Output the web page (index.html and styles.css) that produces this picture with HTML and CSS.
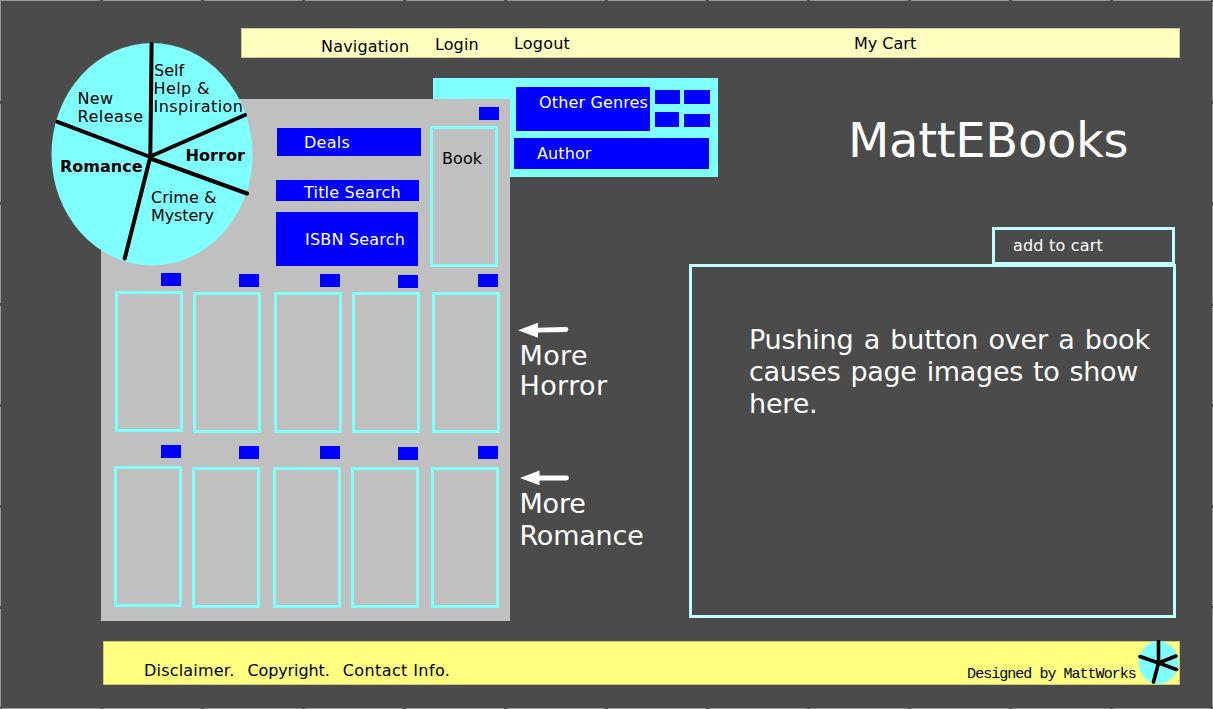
FILE: index.html
```html
<!DOCTYPE html>
<html lang="en">
<head>
<meta charset="utf-8">
<title>MattEBooks</title>
<link rel="stylesheet" href="styles.css">
</head>
<body>
<div class="page">
  <nav class="nav">
    <a class="nav-navigation">Navigation</a>
    <a class="nav-login">Login</a>
    <a class="nav-logout">Logout</a>
    <a class="nav-cart">My Cart</a>
  </nav>

  <main class="main">
    <section class="shelf">
      <div class="shelf-head">
        <div class="searches">
          <div class="btn deals">Deals</div>
          <div class="btn title-search">Title Search</div>
          <div class="btn isbn-search">ISBN Search</div>
        </div>
        <div class="cell featured"><i class="tag"></i><div class="book">Book</div></div>
      </div>
      <div class="row row-horror">
        <div class="cell"><i class="tag"></i><div class="book"></div></div>
        <div class="cell"><i class="tag"></i><div class="book"></div></div>
        <div class="cell"><i class="tag"></i><div class="book"></div></div>
        <div class="cell"><i class="tag"></i><div class="book"></div></div>
        <div class="cell"><i class="tag"></i><div class="book"></div></div>
      </div>
      <div class="row row-romance">
        <div class="cell"><i class="tag"></i><div class="book"></div></div>
        <div class="cell"><i class="tag"></i><div class="book"></div></div>
        <div class="cell"><i class="tag"></i><div class="book"></div></div>
        <div class="cell"><i class="tag"></i><div class="book"></div></div>
        <div class="cell"><i class="tag"></i><div class="book"></div></div>
      </div>
    </section>

    <section class="middle">
      <div class="genres">
        <div class="genres-top">
          <div class="btn other-genres">Other Genres</div>
          <div class="swatches">
            <i class="sw sw1"></i><i class="sw sw2"></i><i class="sw sw3"></i><i class="sw sw4"></i>
          </div>
        </div>
        <div class="btn author">Author</div>
      </div>
      <div class="more more-horror">
        <svg class="arrow" width="52" height="16" viewBox="0 0 52 16"><path d="M0 8.3 20 .8V15.8Z" fill="#fff"/><path d="M18 8.1 48 7.5" stroke="#fff" stroke-width="4.800" stroke-linecap="round"/></svg>
        <p>More<br>Horror</p>
      </div>
      <div class="more more-romance">
        <svg class="arrow" width="52" height="16" viewBox="0 0 52 16"><path d="M2 8 21.500 .5V15.200Z" fill="#fff"/><path d="M20 8H48.500" stroke="#fff" stroke-width="4.800" stroke-linecap="round"/></svg>
        <p>More<br>Romance</p>
      </div>
    </section>

    <section class="right">
      <h1 class="brand">MattEBooks</h1>
      <div class="add">add to cart</div>
      <div class="preview">Pushing a button over a book<br><span class="line2">causes page images to show</span><br>here.</div>
    </section>
  </main>

  <footer class="footer">
    <div class="legal"><a>Disclaimer.</a><a class="copyright">Copyright.</a><a class="contact">Contact Info.</a></div>
    <div class="credit">Designed by MattWorks</div>
    <svg class="logo" width="41" height="45" viewBox="0 0 41 45">
      <ellipse cx="20.500" cy="22.500" rx="19.700" ry="21.500" fill="#80ffff"/>
      <path d="M20.500 1.500V23M38 16 20.500 23 38.500 29.500M20.500 23 15.500 42M20.500 23 2 16.500" fill="none" stroke="#000" stroke-width="3.600" stroke-linecap="round"/>
    </svg>
  </footer>

  <svg class="wheel" width="210" height="230" viewBox="46 40 210 230">
    <ellipse cx="152" cy="154.300" rx="100.500" ry="111.200" fill="#80ffff"/>
    <path d="M151.600 44 150.300 156.500 245 115M150.300 158.500 247 193.500M150.300 157 124.700 258.500M150.300 157 57.500 121.800" fill="none" stroke="#000" stroke-width="4" stroke-linecap="round" stroke-linejoin="round"/>
    <g class="wheel-text">
      <text x="154" y="76">Self</text>
      <text x="153.500" y="94" textLength="56">Help &amp;</text>
      <text x="153.500" y="112" textLength="89.500">Inspiration</text>
      <text x="77.500" y="104" textLength="35.500">New</text>
      <text x="77.500" y="122" textLength="65.500">Release</text>
      <text x="151" y="203" textLength="65.500">Crime &amp;</text>
      <text x="151" y="221" textLength="63">Mystery</text>
      <text class="bold" x="185.500" y="161" textLength="59.500" lengthAdjust="spacingAndGlyphs">Horror</text>
      <text class="bold" x="60" y="172" textLength="82.500" lengthAdjust="spacingAndGlyphs">Romance</text>
    </g>
  </svg>

  <svg class="frame" width="1213" height="709" viewBox="0 0 1213 709">
    <path class="edge" d="M0 .5H1213M1212.500 0V709M0 708.500H1213M.5 0V709"/>
    <path class="ticks" d="M100 1H1213M201 708H1213M101 708H103" />
    <path class="ticks" d="M.5 101V709M1212.500 101V709"/>
  </svg>
</div>
</body>
</html>
```
FILE: styles.css
```css
* { box-sizing: border-box; }
body { margin: 0; background: #4b4b4b; }
.page {
  position: relative;
  width: 1213px;
  height: 709px;
  overflow: hidden;
  background: #4b4b4b;
  padding-top: 28px;
  font: 16px/18px "DejaVu Sans", Verdana, sans-serif;
  letter-spacing: .1px;
  color: #000;
}
.nav {
  display: flex;
  align-items: flex-start;
  width: 938.5px;
  height: 30px;
  margin-left: 241px;
  padding-left: 79px;
  background: #ffffc0;
  border: 1px solid #c9c99c;
}
.nav a { white-space: nowrap; }
.nav-navigation { width: 114px; padding-top: 9px; letter-spacing: .2px; }
.nav-login { width: 79px; padding-top: 7px; }
.nav-logout { width: 340px; padding-top: 6px; letter-spacing: .2px; }
.nav-cart { padding-top: 6px; letter-spacing: 0; }

.main { display: flex; height: 583px; padding-left: 101px; }
.shelf {
  position: relative;
  z-index: 1;
  width: 408.500px;
  height: 521.500px;
  margin-top: 41px;
  background: #c0c0c0;
}
.shelf-head { display: flex; height: 174px; padding-left: 174.500px; }
.searches { width: 154.500px; padding-top: 29px; }
.btn { background: #0000fe; color: #fff; white-space: nowrap; }
.deals { width: 144px; height: 27.500px; margin-left: 1.500px; padding: 6px 0 0 27px; letter-spacing: .3px; }
.title-search { width: 142.500px; height: 20.500px; margin: 24.500px 0 11px .5px; padding: 3.500px 0 0 28px; letter-spacing: .2px; }
.isbn-search { width: 142px; height: 54px; padding: 19px 0 0 29.500px; letter-spacing: .2px; }
.cell { width: 68px; }
.tag { display: block; width: 19.500px; height: 13px; margin-left: 46px; background: #0000fe; }
.book { height: 141px; margin-top: 5px; border: 3px solid #80fffa; }
.featured { padding-top: 8px; }
.featured .tag { margin-left: 49px; margin-bottom: 6px; }
.featured .book { padding: 21px 0 0 9px; }
.row { display: flex; height: 172px; padding-left: 14px; }
.row .cell + .cell { margin: 1px 0 0 10px; }
.row .cell:nth-child(3) { margin-left: 13px; }
.row .cell:nth-child(5) { margin-left: 12px; }
.row .cell:nth-child(4) { padding-top: 1px; }
.row .cell:nth-child(4) .tag { margin-bottom: -1px; }
.row-romance { padding-left: 13px; }
.row-romance .tag { margin-left: 47px; }
.row-romance .book { margin-top: 8px; }

.middle { width: 179.500px; padding-top: 20px; }
.genres {
  width: 284.500px;
  height: 99px;
  margin-left: -76.500px;
  padding: 9px 0 0 81px;
  background: #80ffff;
}
.genres-top { display: flex; height: 51px; padding-left: 2px; }
.other-genres { width: 133.500px; height: 43.500px; padding: 7px 0 0 23px; letter-spacing: .15px; }
.swatches { display: grid; grid-template-columns: 29px 26px; grid-template-rows: 22px 17px; margin: 2.500px 0 0 5px; }
.sw { background: #0000fe; }
.sw1 { width: 25px; height: 14px; }
.sw2 { width: 26px; height: 14px; }
.sw3 { width: 23.500px; height: 15px; margin-left: .5px; }
.sw4 { width: 25.500px; height: 13.500px; margin: 2px 0 0 .5px; }
.author { width: 194.500px; height: 30.500px; padding: 7px 0 0 23px; }
.more { height: 76px; padding-left: 8px; color: #fff; font-size: 27px; }
.more p { margin: 3px 0 0; padding-left: 2px; }
.arrow { display: block; }
.more-horror { margin-top: 145px; line-height: 30px; letter-spacing: .4px; }
.more-romance { margin-top: 72px; line-height: 32px; letter-spacing: -.2px; }
.more-romance p { margin-top: 2px; }

.right { width: 487px; padding-top: 54px; color: #fff; }
.brand { margin: 0; padding-left: 159px; font-size: 48px; line-height: 56px; font-weight: 400; letter-spacing: -.3px; height: 115px; }
.add { width: 183px; height: 38px; margin-left: 303px; padding: 7px 0 0 18px; border: 3px solid #c0ffff; letter-spacing: .2px; }
.preview { height: 354px; margin-top: -1px; padding: 57px 0 0 57px; border: 3px solid #c0ffff; font-size: 27px; line-height: 32px; letter-spacing: -.2px; word-spacing: 1.900px; white-space: nowrap; }
.line2 { letter-spacing: -.3px; word-spacing: 1.700px; }

.footer {
  display: flex;
  width: 1076.500px;
  height: 43.500px;
  margin-left: 103px;
  background: #ffff80;
  border: 1px solid #c9c97c;
}
.legal { display: flex; gap: 13px; width: 865px; padding: 20px 0 0 40px; letter-spacing: .2px; }
.copyright { letter-spacing: -.1px; }
.contact { letter-spacing: .4px; }
.credit { width: 173px; padding: 24px 0 0 1px; font: 15px/18px "Liberation Mono", monospace; letter-spacing: -.97px; white-space: nowrap; }
.logo { margin: -2px 0 0 -1px; flex: none; }

.wheel { position: absolute; left: 46px; top: 40px; z-index: 2; }
.wheel-text { font-size: 16px; letter-spacing: 0; }
.bold { font-weight: 700; }
.frame { position: absolute; left: 0; top: 0; z-index: 3; pointer-events: none; fill: none; }
.edge { stroke: #989898; stroke-width: 1; }
.ticks { stroke: #4b4b4b; stroke-width: 2; stroke-dasharray: 3 98; }
```
